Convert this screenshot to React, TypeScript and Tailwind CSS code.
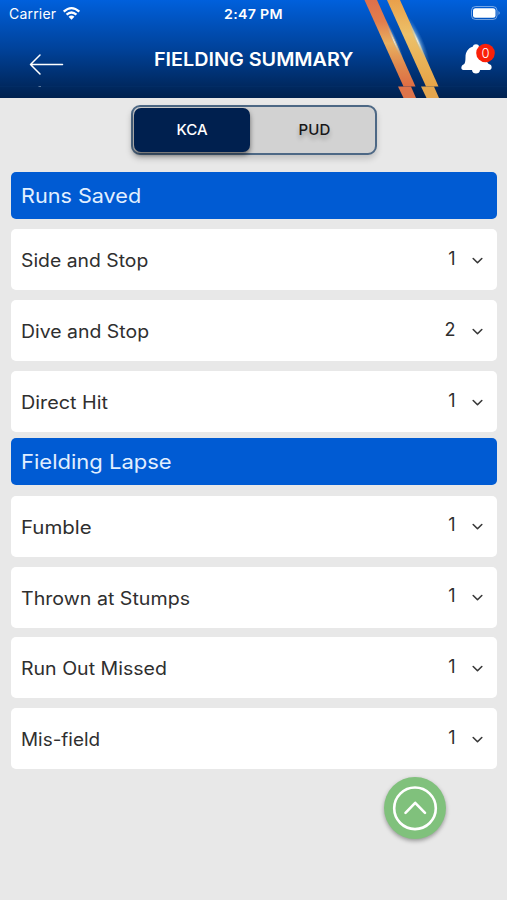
type Row = { label: string; count: number; stretch: string };

const runsSaved: Row[] = [
  { label: "Side and Stop", count: 1, stretch: "scale-x-[1.075]" },
  { label: "Dive and Stop", count: 2, stretch: "scale-x-[1.08]" },
  { label: "Direct Hit", count: 1, stretch: "scale-x-[1.1]" },
];

const fieldingLapse: Row[] = [
  { label: "Fumble", count: 1, stretch: "scale-x-[1.135]" },
  { label: "Thrown at Stumps", count: 1, stretch: "scale-x-[1.09]" },
  { label: "Run Out Missed", count: 1, stretch: "scale-x-[1.085]" },
  { label: "Mis-field", count: 1, stretch: "scale-x-[1.05]" },
];

function Stripes() {
  return (
    <svg className="absolute inset-0 h-[98px] w-[507px]" viewBox="0 0 507 98">
      <defs>
        <linearGradient id="orange" x1="0" y1="0" x2="0" y2="1">
          <stop offset="0" stopColor="#df704b" />
          <stop offset="0.25" stopColor="#e27e4d" />
          <stop offset="0.5" stopColor="#e9b060" />
          <stop offset="0.75" stopColor="#e08a4e" />
          <stop offset="1" stopColor="#de6d43" />
        </linearGradient>
        <linearGradient id="gold" x1="0" y1="0" x2="0" y2="1">
          <stop offset="0" stopColor="#e9a04b" />
          <stop offset="0.4" stopColor="#ecc169" />
          <stop offset="1" stopColor="#e6a447" />
        </linearGradient>
        <radialGradient id="glow">
          <stop offset="0" stopColor="#ffffff" stopOpacity="0.85" />
          <stop offset="0.4" stopColor="#b9dcf2" stopOpacity="0.45" />
          <stop offset="1" stopColor="#6aaeea" stopOpacity="0" />
        </radialGradient>
      </defs>
      <ellipse cx="393" cy="40" rx="4" ry="26" fill="url(#glow)" transform="rotate(-24 393 40)" />
      <ellipse cx="417" cy="41" rx="6" ry="28" fill="url(#glow)" transform="rotate(-24 417 41)" />
      <path d="M364.500 0H377L415.500 86.500H403.500Z" fill="url(#orange)" />
      <path d="M387 0H400L438.500 86.500H426Z" fill="url(#gold)" />
      <ellipse cx="394" cy="41" rx="1.600" ry="18" fill="url(#glow)" transform="rotate(-24 394 41)" />
      <ellipse cx="417.500" cy="41" rx="2" ry="20" fill="url(#glow)" transform="rotate(-24 417.500 41)" />
      <path d="M398 86.500H411L416 98H403.500Z" fill="#de744b" />
      <path d="M421 86.500H434L439 98H426.500Z" fill="#e3a64f" />
      <path d="M0 86.500H398M439 86.500H507" stroke="#07346c" strokeOpacity="0.35" />
      <path d="M38.500 86.500H41" stroke="#b5c4d9" strokeOpacity="0.5" />
    </svg>
  );
}

function Header() {
  return (
    <header className="relative h-[98px] shrink-0 bg-linear-to-b from-[#0060dc] via-[#00429a] to-[#00214f] text-white">
      <Stripes />
      <div className="relative flex h-7 items-center pl-[9px] pr-[5px]">
        <span className="w-[53px] text-[14px] leading-7 tracking-[0.2px]">Carrier</span>
        <svg className="-mt-[2px] h-[15px] w-[19px]" viewBox="0 0 20 15" fill="none" stroke="white">
          <path d="M1.800 5.500Q10 -1.800 18.200 5.500" strokeWidth="2.500" />
          <path d="M4.800 8.700Q10 4.100 15.200 8.700" strokeWidth="2.400" />
          <path d="M10 14L6.900 10.900Q10 8.300 13.100 10.900Z" fill="white" stroke="none" />
        </svg>
        <span className="ml-[143px] origin-left scale-x-[1.05] text-[13.500px] font-semibold leading-7 tracking-[0.3px]">2:47 PM</span>
        <svg className="-mt-[1px] ml-auto h-[15px] w-[31px]" viewBox="0 0 31 15">
          <rect x="0.500" y="0.500" width="25.500" height="13" rx="4" fill="none" stroke="white" strokeOpacity="0.45" />
          <rect x="2" y="2.200" width="22.500" height="9.600" rx="2.500" fill="white" />
          <path d="M27.500 5Q30 7 27.500 9Z" fill="white" fillOpacity="0.5" />
        </svg>
      </div>
      <div className="relative flex h-[62px] items-start">
        <svg className="ml-[28px] mt-[25px] h-[24px] w-[37px]" viewBox="0 0 37 24" fill="none" stroke="white" strokeWidth="1.500" strokeLinecap="round" strokeLinejoin="round">
          <path d="M12 2L2.500 11.500L12 21M2.500 11.500H34.500" />
        </svg>
        <h1 className="ml-[89px] mt-[20px] origin-left scale-x-[1.04] whitespace-nowrap text-[19px] font-semibold leading-[24px]">FIELDING SUMMARY</h1>
        <svg className="absolute left-[460px] top-[14px] h-[34px] w-[36px]" viewBox="0 0 36 34">
          <path d="M13 4.500C13 1.500 19 1.500 19 4.500C24 6 26.500 10 26.500 15C26.500 19.500 27.500 22 30 22.500C32.500 23.500 32 28 29.500 28H20C20 32.800 12 32.800 12 28H3.500C0.500 28 0.800 23.500 3.500 22.500C5 22 5.500 19.500 5.500 15C5.500 10 8 6 13 4.500Z" fill="white" />
          <circle cx="25.500" cy="11" r="9.300" fill="#fa2008" />
        </svg>
        <span className="absolute left-[480px] top-[16px] w-[11px] text-center text-[13px] font-light leading-[18px]">0</span>
      </div>
    </header>
  );
}

function Tabs() {
  return (
    <div className="ml-[131px] mt-[7px] flex h-[50px] w-[246px] shrink-0 rounded-[9px] border-2 border-[#4d6885] bg-[#d2d2d2] p-px text-center text-[15px] font-medium leading-[44px] shadow-[0_4px_6px_rgba(0,0,0,0.16)]">
      <div className="w-[116px] rounded-[7px] bg-[#00204f] text-white shadow-[0_3px_5px_rgba(0,0,0,0.5)]">KCA</div>
      <div className="flex-1 pl-[5px] tracking-[0.2px] text-[#171717] [text-shadow:0_4px_4px_rgba(0,0,0,0.25)]">PUD</div>
    </div>
  );
}

function SectionTitle({ text, stretch }: { text: string; stretch: string }) {
  return (
    <h2 className="h-[47.300px] shrink-0 rounded-[5px] bg-[#005bd3] pl-[10px] text-[20px] leading-[49px] text-[#e2efff]">
      <span className={`inline-block origin-left ${stretch}`}>{text}</span>
    </h2>
  );
}

function Card({ row }: { row: Row }) {
  return (
    <div className="flex h-[61px] shrink-0 items-center rounded-[5px] bg-white pl-[10.500px] pr-[13.500px] text-[18px] text-[#2f2f2f]">
      <span className={`mt-[2px] origin-left ${row.stretch}`}>{row.label}</span>
      <span className="mb-[3px] ml-auto mr-[16.500px]">{row.count}</span>
      <svg className="mt-[2px] h-[8px] w-[11px]" viewBox="0 0 11 8" fill="none" stroke="#383838" strokeWidth="1.600" strokeLinecap="round" strokeLinejoin="round">
        <path d="M1.200 1.500L5.500 5.700L9.800 1.500" />
      </svg>
    </div>
  );
}

function CardList({ rows }: { rows: Row[] }) {
  return (
    <div className="mt-[10.400px] flex flex-col gap-[9.850px]">
      {rows.map((row) => <Card key={row.label} row={row} />)}
    </div>
  );
}

export default function App() {
  return (
    <div className="relative flex h-[900px] w-[507px] flex-col overflow-hidden bg-[#e8e8e8] font-['Inter','Liberation_Sans',sans-serif]">
      <Header />
      <Tabs />
      <main className="mx-[10.500px] mt-[16.700px] flex flex-col">
        <SectionTitle text="Runs Saved" stretch="scale-x-[1.08]" />
        <CardList rows={runsSaved} />
        <div className="h-[6px]" />
        <SectionTitle text="Fielding Lapse" stretch="scale-x-[1.1]" />
        <CardList rows={fieldingLapse} />
      </main>
      <button aria-label="Scroll to top" className="absolute left-[384px] top-[777px] size-[62px] rounded-full bg-[#80c17c] shadow-[0_2px_4px_rgba(0,0,0,0.35)]">
        <svg className="size-[62px]" viewBox="0 0 62 62" fill="none" stroke="white" strokeLinecap="round" strokeLinejoin="round">
          <circle cx="31" cy="31.300" r="20.800" strokeWidth="2.600" />
          <path d="M21.500 35.800L31.200 25.800L41 35.800" strokeWidth="2.600" />
        </svg>
      </button>
    </div>
  );
}
